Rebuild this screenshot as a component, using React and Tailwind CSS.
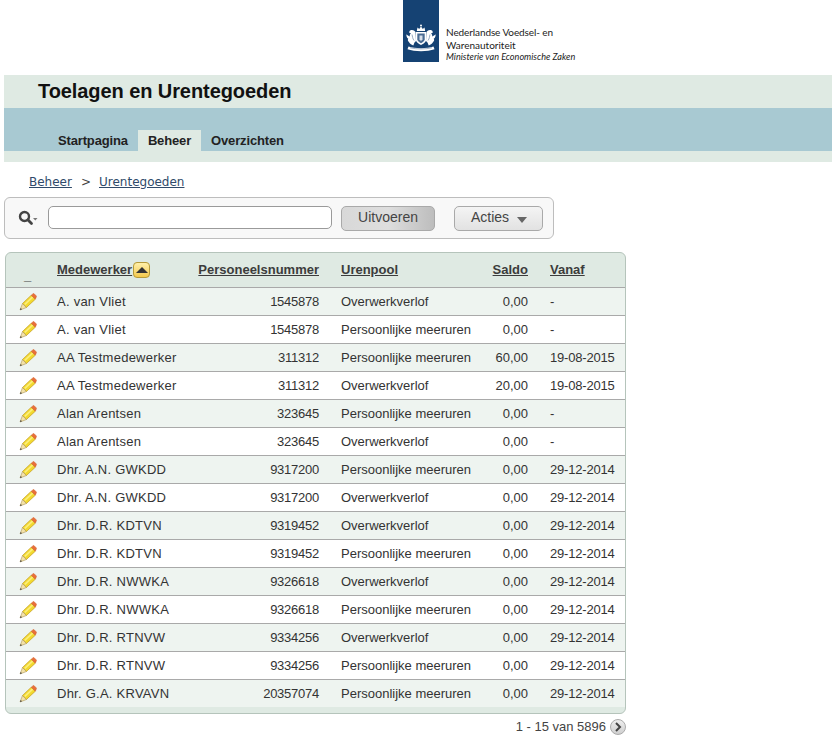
const rows = [
  ['A. van Vliet', '1545878', 'Overwerkverlof', '0,00', '-'],
  ['A. van Vliet', '1545878', 'Persoonlijke meeruren', '0,00', '-'],
  ['AA Testmedewerker', '311312', 'Persoonlijke meeruren', '60,00', '19-08-2015'],
  ['AA Testmedewerker', '311312', 'Overwerkverlof', '20,00', '19-08-2015'],
  ['Alan Arentsen', '323645', 'Persoonlijke meeruren', '0,00', '-'],
  ['Alan Arentsen', '323645', 'Overwerkverlof', '0,00', '-'],
  ['Dhr. A.N. GWKDD', '9317200', 'Persoonlijke meeruren', '0,00', '29-12-2014'],
  ['Dhr. A.N. GWKDD', '9317200', 'Overwerkverlof', '0,00', '29-12-2014'],
  ['Dhr. D.R. KDTVN', '9319452', 'Overwerkverlof', '0,00', '29-12-2014'],
  ['Dhr. D.R. KDTVN', '9319452', 'Persoonlijke meeruren', '0,00', '29-12-2014'],
  ['Dhr. D.R. NWWKA', '9326618', 'Overwerkverlof', '0,00', '29-12-2014'],
  ['Dhr. D.R. NWWKA', '9326618', 'Persoonlijke meeruren', '0,00', '29-12-2014'],
  ['Dhr. D.R. RTNVW', '9334256', 'Overwerkverlof', '0,00', '29-12-2014'],
  ['Dhr. D.R. RTNVW', '9334256', 'Persoonlijke meeruren', '0,00', '29-12-2014'],
  ['Dhr. G.A. KRVAVN', '20357074', 'Persoonlijke meeruren', '0,00', '29-12-2014'],
];

function Crest() {
  return (
    <svg width="36" height="62" viewBox="0 0 36 62">
      <rect width="36" height="62" fill="#154273" />
      <g fill="#fff">
        {/* crown */}
        <path d="M14.500 27.500 13.800 31h8.400l-.7-3.500-1.700 1.500-1.800-2.500-1.800 2.500z" />
        <circle cx="18" cy="25.500" r="1" />
        {/* lions */}
        <path d="M12.500 32c-1-1.800-3-2.500-5-1.800-1.200.5-1.500 1.800-1 2.800l1.500.2c-1 1-1.500 2.200-1.200 3.300-1.200-.3-2.500-1.200-3.300-2.200-.4 1.800.4 3.500 1.800 4.500-.8 1-.5 2.300.5 3 .8 1.800 2.500 3 4.500 3.700l1.200-3 1.500-1.500z" />
        <path d="M23.500 32c1-1.800 3-2.500 5-1.800 1.200.5 1.500 1.800 1 2.800l-1.500.2c1 1 1.500 2.200 1.200 3.300 1.200-.3 2.500-1.200 3.300-2.200.4 1.800-.4 3.500-1.800 4.500.8 1 .5 2.300-.5 3-.8 1.800-2.500 3-4.500 3.700l-1.200-3-1.500-1.500z" />
        {/* shield */}
        <path d="M12.800 32h10.400v7.500c0 2.500-2.800 4.300-5.200 5.500-2.400-1.200-5.200-3-5.200-5.500z" />
        {/* ribbon */}
        <path d="M5.500 46.500c6 2.200 19 2.200 25 0l1 2.800c-7 2.500-20 2.500-27 0z" />
      </g>
      <path d="M14.300 33.500h7.400v5.800c0 1.700-2 3-3.700 4-1.700-1-3.700-2.300-3.700-4z" fill="#4a6c93" />
      <path d="M16.500 35.500h3v4l-1.500 1.500-1.500-1.500z" fill="#d8e0ea" />
      <path d="M7 47.800c6 1.500 16 1.500 22 0" fill="none" stroke="#6d88a8" strokeWidth="0.6" />
      <path d="M9 34.500c.5 2 .5 4 2 6M27 34.500c-.5 2-.5 4-2 6" fill="none" stroke="#6d88a8" strokeWidth="0.7" />
    </svg>
  );
}

function Pencil() {
  return (
    <svg width="18" height="18" viewBox="0 0 18 18" className="block">
      <path d="M3.500 10.500 12.300 2.200l4 4-8.900 8.300z" fill="#f2d92e" stroke="#c9a32a" strokeWidth="0.8" />
      <path d="M5.200 10.800 13 3.600l1.200 1.200-7.800 7.200z" fill="#fbee7a" />
      <path d="M12.300 2.200 13.800.9c.5-.4 1.100-.4 1.500 0l1.900 1.900c.4.500.4 1.100 0 1.500L16.300 6.200z" fill="#e9703a" stroke="#cf6030" strokeWidth="0.5" />
      <path d="M3.500 10.500 1 17l6.400-2.500z" fill="#f3e2a8" stroke="#ad9358" strokeWidth="0.6" />
      <path d="M1.700 15 1 17l2-.8z" fill="#3a3a3a" />
    </svg>
  );
}

function SearchIcon() {
  return (
    <svg width="20" height="16" viewBox="0 0 20 16">
      <circle cx="6.500" cy="6.500" r="4.500" fill="none" stroke="#444" strokeWidth="2.400" />
      <path d="m9.800 9.800 3.700 3.700" stroke="#444" strokeWidth="2.800" strokeLinecap="round" />
      <path d="M15 8h4.500l-2.200 2.400z" fill="#777" />
    </svg>
  );
}

export default function App() {
  return (
    <div className="w-[832px] h-[742px] overflow-hidden bg-white font-['Liberation_Sans',Arial,sans-serif] text-[13px] text-[#333]">
      <div className="h-[75px] pl-[403px] flex items-start">
        <Crest />
        <div className="pl-[7px] pt-[26px] font-['Lato',sans-serif] text-[10px] leading-[12.5px] text-[#222]">
          <div className="tracking-[-0.1px]">Nederlandse Voedsel- en</div>
          <div>Warenautoriteit</div>
          <div className="italic text-[9.1px]">Ministerie van Economische Zaken</div>
        </div>
      </div>

      <div className="ml-1 bg-[#dfeae3]">
        <h1 className="h-[33px] pl-[34px] text-[20px] tracking-[-0.08px] leading-[32px] font-bold text-[#111]">Toelagen en Urentegoeden</h1>
        <div className="h-[43px] bg-[#a8c9d2] flex items-end pl-[45px] text-[13px] tracking-[-0.15px] font-bold text-[#222]">
          <span className="h-[21px] leading-[21px] pl-[9px] pr-[10px]">Startpagina</span>
          <span className="h-[21px] leading-[21px] px-[10px] bg-[#dfeae3]">Beheer</span>
          <span className="h-[21px] leading-[21px] px-[10px]">Overzichten</span>
        </div>
        <div className="h-[11px]" />
      </div>

      <div className="pl-[29px] pt-[13px] h-[35px] font-['DejaVu_Sans',sans-serif] text-[12px] leading-[15px] text-[#2f4a6a]">
        <a className="underline">Beheer</a>
        <span className="ml-[9px] mr-[8px] text-[#444]">&gt;</span>
        <a className="underline">Urentegoeden</a>
      </div>

      <div className="ml-1 w-[550px] h-[42px] border border-[#bdbdbd] rounded-md bg-[#f8f8f8] flex items-start pt-2 pl-[13px]">
        <div className="w-[30px] pt-[4px]"><SearchIcon /></div>
        <div className="w-[284px] h-[23px] border border-[#9a9a9a] rounded-[5px] bg-white" />
        <button className="ml-[9px] w-[94px] h-[25px] border border-[#a9a9a9] rounded-[5px] bg-linear-to-r from-[#d8d8d8] via-[#dedede] to-[#bdbdbd] text-[14px] text-[#444] leading-[19px] pb-[2px]">Uitvoeren</button>
        <button className="ml-[19px] w-[89px] h-[25px] border border-[#a9a9a9] rounded-[5px] bg-linear-to-b from-[#f4f4f4] to-[#e2e2e2] text-[14px] text-[#444] leading-[19px] pb-[2px] pl-px flex items-center justify-center gap-[8px]">
          Acties
          <span className="mt-[4px] w-0 h-0 border-x-[5.500px] border-x-transparent border-t-[6px] border-t-[#666]" />
        </button>
      </div>

      <div className="ml-[5px] mt-[13px] w-[621px] border border-[#b5c4bb] rounded-md overflow-hidden bg-[#dfeae3] pb-[6px]">
        <table className="w-[619px] table-fixed border-collapse">
          <colgroup>
            <col className="w-[40px]" />
            <col className="w-[141px]" />
            <col className="w-[143px]" />
            <col className="w-[152px]" />
            <col className="w-[57px]" />
            <col className="w-[86px]" />
          </colgroup>
          <thead>
            <tr className="h-[34px] text-[13px] font-bold text-[#3c3c3c]">
              <th className="pl-[18px] text-left font-bold align-bottom pb-[5px] leading-none">_</th>
              <th className="pl-[11px] text-left font-bold">
                <span className="inline-flex items-center">
                  <a className="underline">Medewerker</a>
                  <span className="ml-px w-[17px] h-[16px] rounded-[4px] border border-[#b59a3a] bg-linear-to-b from-[#fff0a8] to-[#f3c94a] flex items-center justify-center">
                    <span className="w-0 h-0 border-x-[6px] border-x-transparent border-b-[6px] border-b-[#333]" />
                  </span>
                </span>
              </th>
              <th className="pr-[11px] text-right font-bold"><a className="underline">Personeelsnummer</a></th>
              <th className="pl-[11px] text-left font-bold"><a className="underline">Urenpool</a></th>
              <th className="pr-[11px] text-right font-bold"><a className="underline">Saldo</a></th>
              <th className="pl-[11px] text-left font-bold"><a className="underline">Vanaf</a></th>
            </tr>
          </thead>
          <tbody>
            {rows.map((row, i) => (
              <tr key={i} className={`h-[28px] border-t border-[#a9a9a9] ${i % 2 === 0 ? 'bg-[#eef4f0]' : 'bg-white'}`}>
                <td className="pl-[13px] pt-px"><Pencil /></td>
                <td className="pl-[11px] pt-px whitespace-nowrap tracking-[0.25px]">{row[0]}</td>
                <td className="pr-[11px] pt-px text-right tracking-[-0.25px]">{row[1]}</td>
                <td className="pl-[11px] pt-px whitespace-nowrap">{row[2]}</td>
                <td className="pr-[11px] pt-px text-right">{row[3]}</td>
                <td className="pl-[11px] pt-px whitespace-nowrap tracking-[-0.2px]">{row[4]}</td>
              </tr>
            ))}
          </tbody>
        </table>
      </div>

      <div className="ml-[5px] w-[621px] mt-[3px] flex items-center justify-end gap-[4px] text-[#444]">
        <span>1 - 15 van 5896</span>
        <span className="w-[16px] h-[16px] rounded-full border border-[#aaa] bg-linear-to-b from-[#eee] to-[#cfcfcf] flex items-center justify-center">
          <svg width="8" height="10" viewBox="0 0 8 10"><path d="m2 1 4 4-4 4" fill="none" stroke="#444" strokeWidth="2" /></svg>
        </span>
      </div>
    </div>
  );
}
